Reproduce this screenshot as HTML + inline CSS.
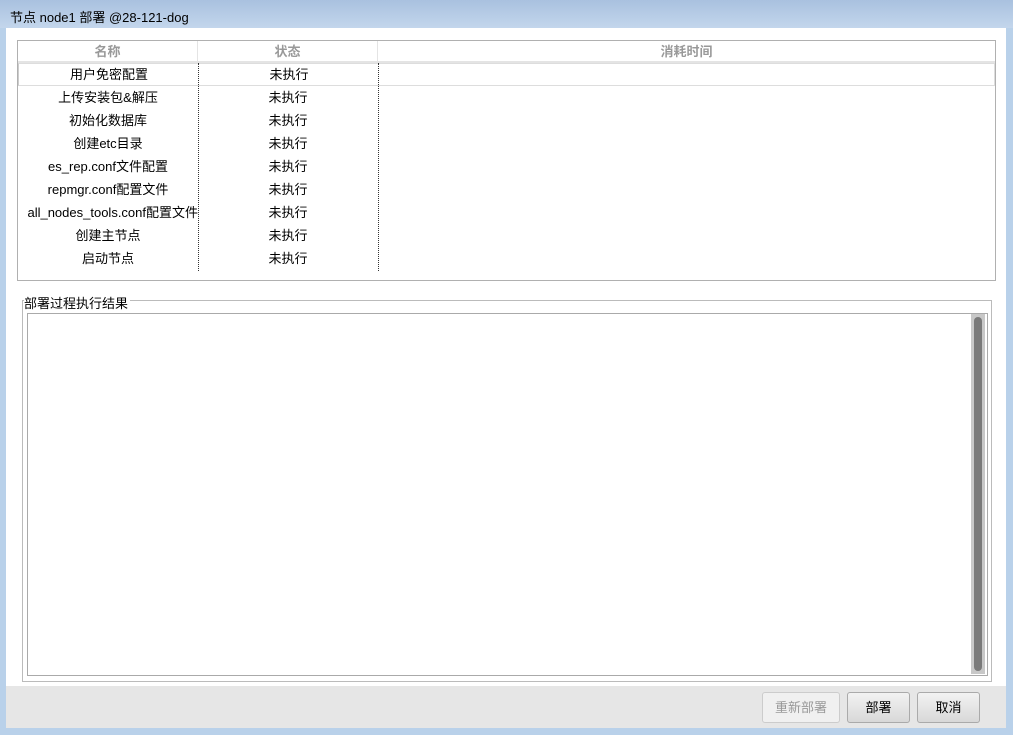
<!DOCTYPE html>
<html><head><meta charset="utf-8"><style>
*{margin:0;padding:0;box-sizing:border-box}
body{width:1013px;height:735px;position:relative;overflow:hidden;background:#b9d1ea;font-family:"Liberation Sans","Noto Sans CJK SC",sans-serif;font-size:13px;color:#000}
.title{position:absolute;left:0;top:0;width:1013px;height:28px;background:linear-gradient(#a9c1df,#c3d6ec);}
.title span{position:absolute;left:10px;top:7px;font-size:13px}
.client{position:absolute;left:6px;top:28px;width:1000px;height:700px;background:#fff}
.bottom{position:absolute;left:6px;top:686px;width:1000px;height:42px;background:#e6e6e6}
.tbl{position:absolute;left:17px;top:40px;width:979px;height:241px;border:1px solid #b0b0b0}
.hdr{position:absolute;top:0;height:22px;color:#999;font-weight:bold;text-align:center;line-height:21px;border-bottom:2px solid #e4e4e4}
.row{position:absolute;left:0;width:977px;height:23px;line-height:23px}
.c1,.c2{position:absolute;text-align:center;white-space:nowrap;overflow:hidden}
.c1{left:0;width:180px}.c2{left:180px;width:180px}
.vl{position:absolute;top:22px;height:208px;border-left:1px dotted #333}
.grp{position:absolute;left:22px;top:300px;width:970px;height:382px;border:1px solid #bbb}
.grp .lbl{position:absolute;left:1px;top:-8px;background:#fff;padding-right:2px;font-size:13px}
.ta{position:absolute;left:27px;top:313px;width:961px;height:363px;border:1px solid #aaa}
.sb{position:absolute;left:971px;top:314px;width:14px;height:360px;background:#c8c8c8}
.sb div{position:absolute;left:3px;top:3px;width:8px;height:354px;background:#7a7a7a;border-radius:4px}
.btn{position:absolute;top:692px;height:31px;border:1px solid #aaa;border-radius:3px;background:linear-gradient(#f2f2f2,#d8d8d8);text-align:center;line-height:29px;font-size:13px}
</style></head><body>
<div class="title"><span>节点 node1 部署 @28-121-dog</span></div>
<div class="client"></div>
<div class="bottom"></div>
<div class="tbl">
<div class="hdr" style="left:0;width:180px;border-right:1px solid #e4e4e4">名称</div>
<div class="hdr" style="left:180px;width:180px;border-right:1px solid #e4e4e4">状态</div>
<div class="hdr" style="left:360px;width:617px">消耗时间</div>
<div class="row" style="top:22px;border:1px solid #ddd;border-left:1px solid #ccc;line-height:21px"><div class="c1">用户免密配置</div><div class="c2">未执行</div></div>
<div class="row" style="top:45px"><div class="c1">上传安装包&amp;解压</div><div class="c2">未执行</div></div>
<div class="row" style="top:68px"><div class="c1">初始化数据库</div><div class="c2">未执行</div></div>
<div class="row" style="top:91px"><div class="c1">创建etc目录</div><div class="c2">未执行</div></div>
<div class="row" style="top:114px"><div class="c1">es_rep.conf文件配置</div><div class="c2">未执行</div></div>
<div class="row" style="top:137px"><div class="c1">repmgr.conf配置文件</div><div class="c2">未执行</div></div>
<div class="row" style="top:160px"><div class="c1" style="text-align:right;direction:rtl"><span style="direction:ltr;unicode-bidi:embed">all_nodes_tools.conf配置文件</span></div><div class="c2">未执行</div></div>
<div class="row" style="top:183px"><div class="c1">创建主节点</div><div class="c2">未执行</div></div>
<div class="row" style="top:206px"><div class="c1">启动节点</div><div class="c2">未执行</div></div>
<div class="vl" style="left:180px"></div><div class="vl" style="left:360px"></div>
</div>
<div class="grp"><div class="lbl">部署过程执行结果</div></div>
<div class="ta"></div>
<div class="sb"><div></div></div>
<div class="btn" style="left:762px;width:78px;color:#999;background:#f0f0f0;border-color:#ccc">重新部署</div>
<div class="btn" style="left:847px;width:63px">部署</div>
<div class="btn" style="left:917px;width:63px">取消</div>
</body></html>
